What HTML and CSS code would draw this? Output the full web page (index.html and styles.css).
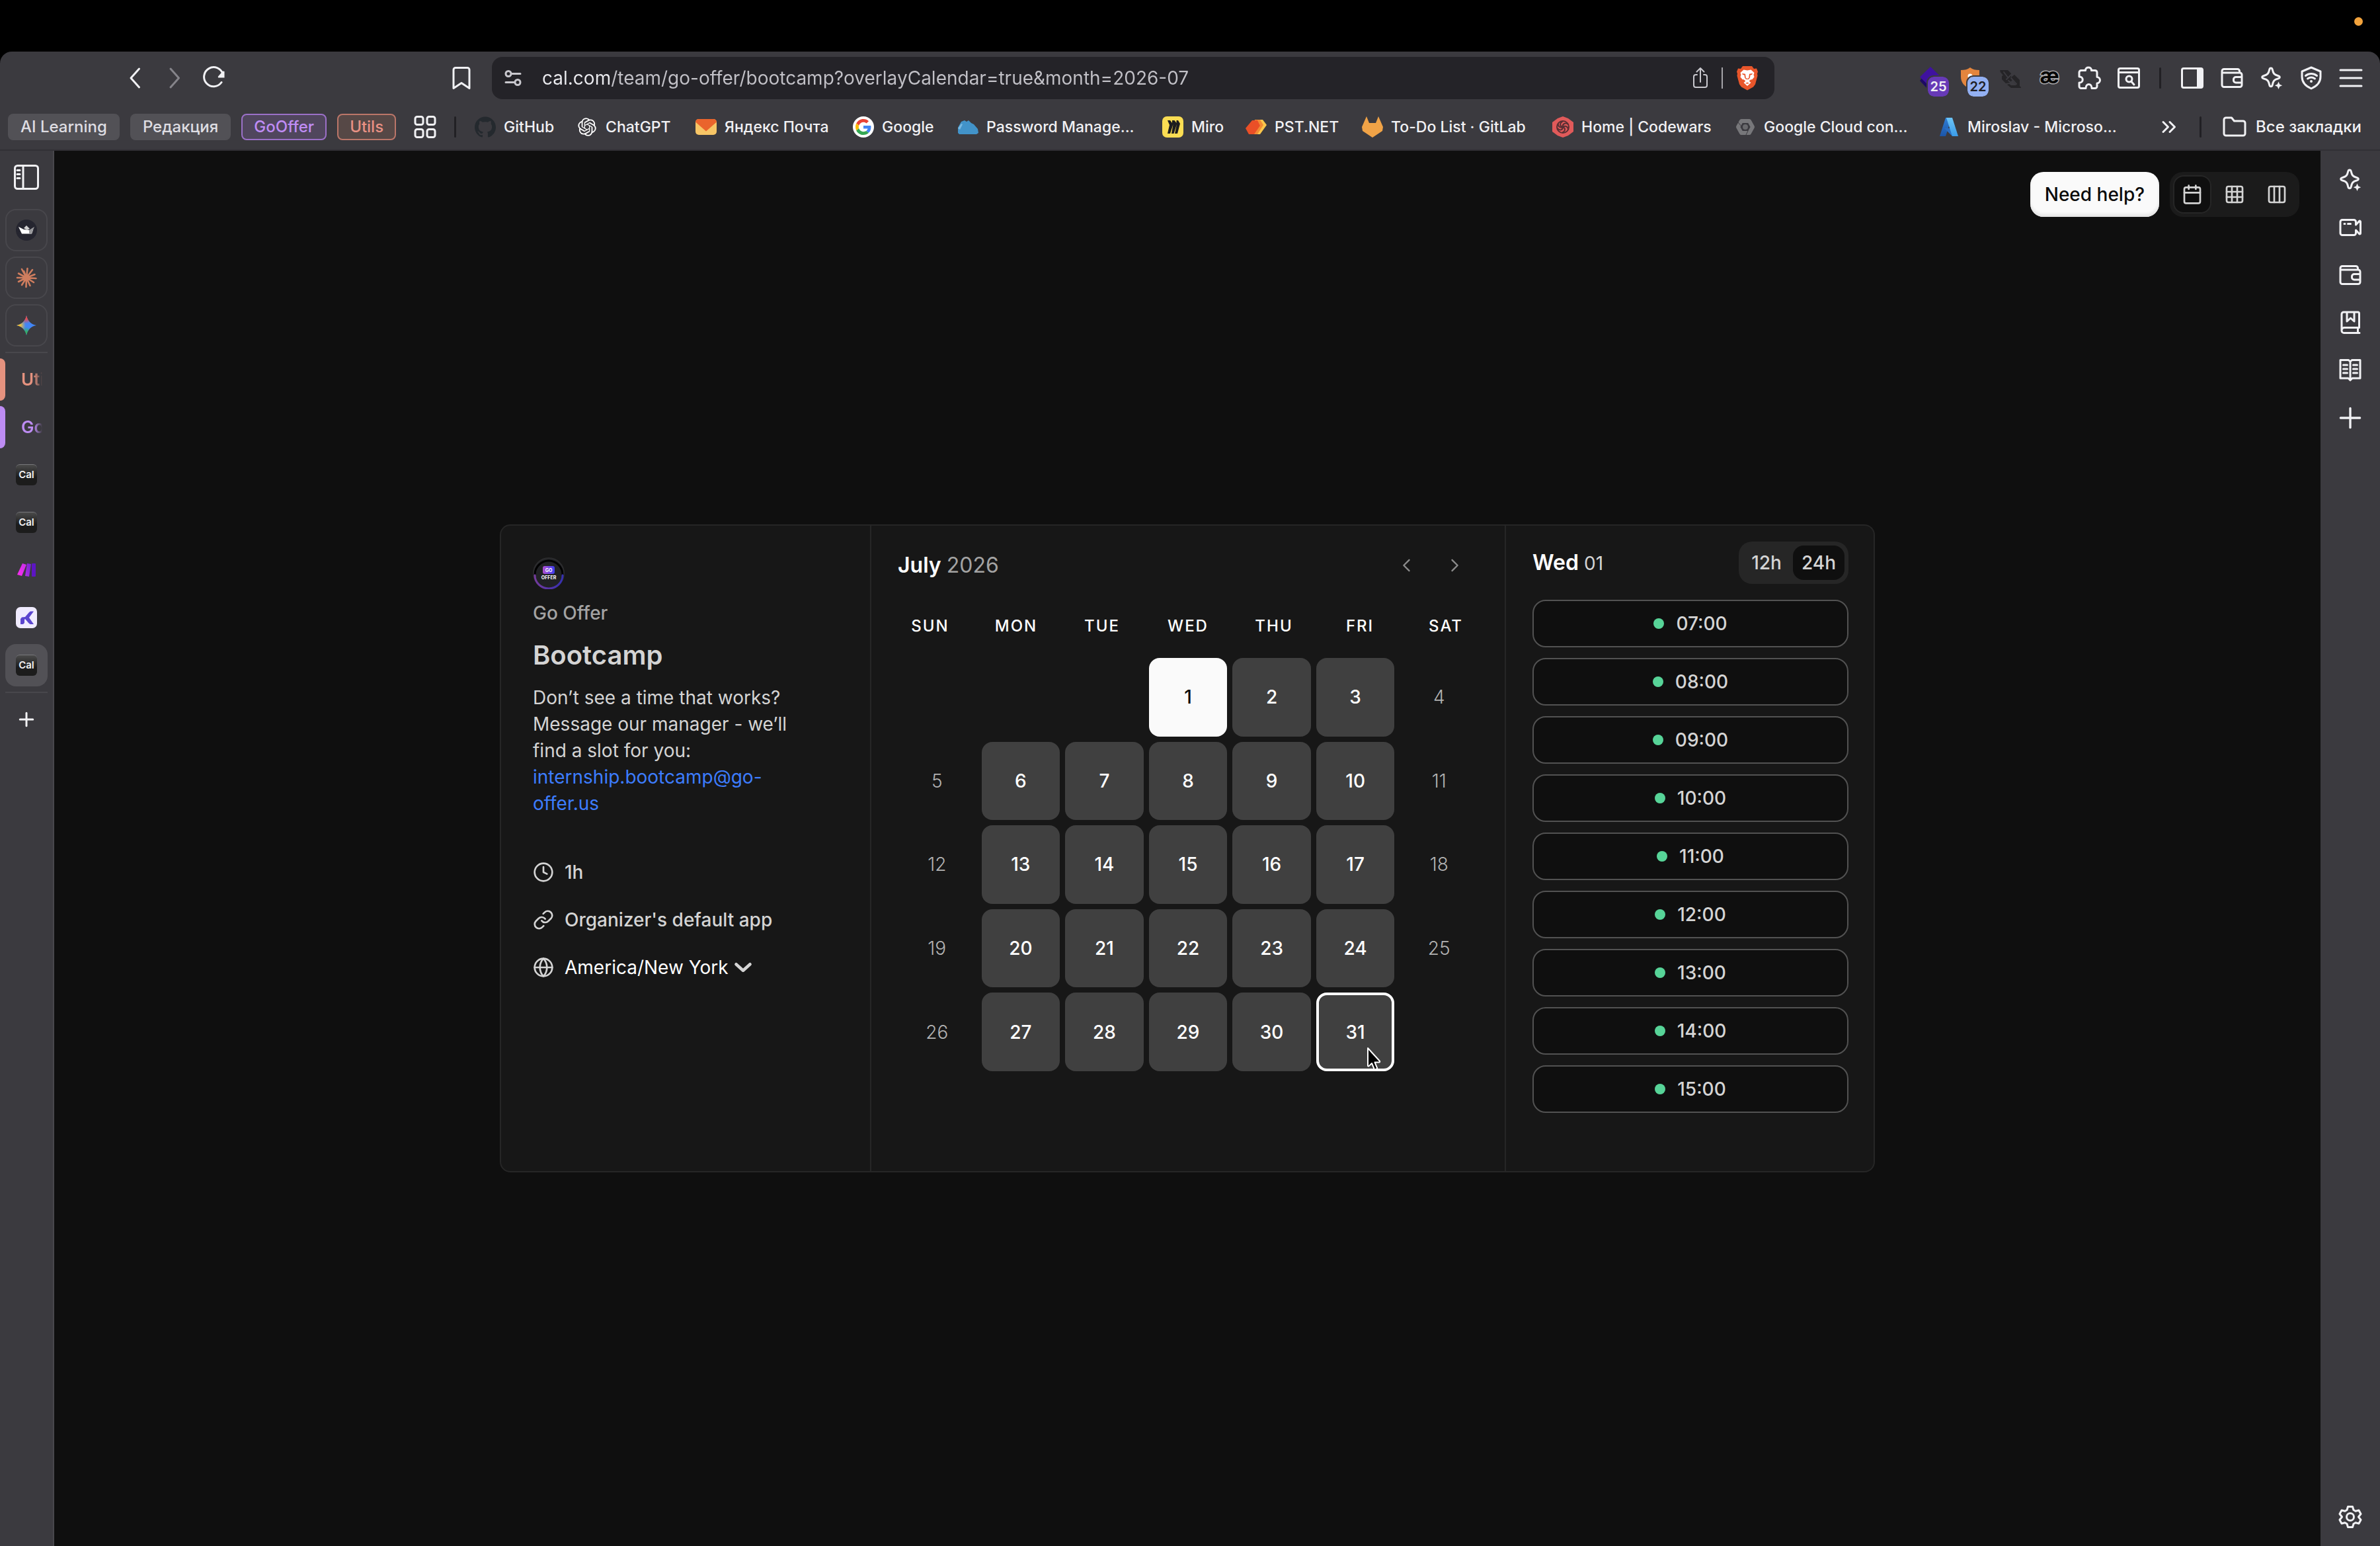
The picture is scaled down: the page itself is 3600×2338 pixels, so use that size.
FILE: index.html
```html
<!DOCTYPE html>
<html lang="en">
<head>
<meta charset="utf-8">
<meta name="viewport" content="width=device-width, initial-scale=1">
<title>Bootcamp | Go Offer | Cal.com</title>
<link rel="stylesheet" href="styles.css">
</head>
<body>
<svg class="sprite" aria-hidden="true">
  <defs>
    <linearGradient id="az1" x1="0" y1="0" x2="0" y2="1"><stop offset="0" stop-color="#2f7fd6"/><stop offset="1" stop-color="#1c55a8"/></linearGradient>
    <linearGradient id="az2" x1="0" y1="0" x2="0" y2="1"><stop offset="0" stop-color="#6cc4f7"/><stop offset="1" stop-color="#3a9be8"/></linearGradient>
    <linearGradient id="mk1" x1="0" y1="1" x2="1" y2="0"><stop offset="0" stop-color="#ff2df0"/><stop offset="1" stop-color="#c32ee8"/></linearGradient>
    <linearGradient id="mk2" x1="0" y1="1" x2="1" y2="0"><stop offset="0" stop-color="#b02ee6"/><stop offset="1" stop-color="#7421d0"/></linearGradient>
    <linearGradient id="go" x1="0" y1="0" x2="1" y2="0"><stop offset="0" stop-color="#b14fd0"/><stop offset="1" stop-color="#3b3df0"/></linearGradient>
    <linearGradient id="ring" x1="0" y1="0" x2="1" y2="0"><stop offset="0" stop-color="#743a9c"/><stop offset="1" stop-color="#352fb0"/></linearGradient>
    <radialGradient id="gm1" cx="46%" cy="0%" r="42%"><stop offset="0.4" stop-color="#ee4a45"/><stop offset="1" stop-color="#ee4a45" stop-opacity="0"/></radialGradient>
    <radialGradient id="gm2" cx="0%" cy="50%" r="46%"><stop offset="0.4" stop-color="#f5c02f"/><stop offset="1" stop-color="#f5c02f" stop-opacity="0"/></radialGradient>
    <radialGradient id="gm3" cx="46%" cy="100%" r="42%"><stop offset="0.4" stop-color="#34b35a"/><stop offset="1" stop-color="#34b35a" stop-opacity="0"/></radialGradient>
  </defs>
  <symbol id="i-wallet" viewBox="0 0 36 36"><path d="M3 8v20.500a3 3 0 0 0 3 3h24a3 3 0 0 0 3-3V13a3 3 0 0 0-3-3H3M3 10V7.500a3 3 0 0 1 3-3h20.500a3 3 0 0 1 3 3V10M33 16.500h-9a3.500 3.500 0 0 0-3.500 3.500v1.500a3.500 3.500 0 0 0 3.500 3.500h9"/></symbol>
  <symbol id="i-spark" viewBox="0 0 36 36"><path d="M17 3c1.300 0 2 1 2.300 2.300 1.200 6 2.700 7.700 8.200 9.200 3.700 1 3.700 3.500 0 4.500-5.500 1.500-7 3.200-8.200 9.200-.600 3.400-4 3.400-4.600 0-1.200-6-2.700-7.700-8.200-9.200-3.700-1-3.700-3.500 0-4.500 5.500-1.500 7-3.200 8.200-9.200C15 4 15.700 3 17 3z"/><path class="solid" d="M28.500 23.500l1.700 4 4 1.700-4 1.700-1.700 4-1.700-4-4-1.700 4-1.700z"/></symbol>
  <symbol id="i-plus" viewBox="0 0 32 32"><path d="M16 3v26M3 16h26"/></symbol>
</svg>

<div class="menubar"><span class="rec-dot"></span></div>

<header class="chrome">
  <div class="toolbar">
    <nav class="nav-group" aria-label="Navigation">
      <button class="tool" aria-label="Back"><svg viewBox="0 0 36 36"><path d="M24.500 4L12 18l12.500 14"/></svg></button>
      <button class="tool dim" aria-label="Forward"><svg viewBox="0 0 36 36"><path d="M12 4l12.500 14L12 32"/></svg></button>
      <button class="tool" aria-label="Reload"><svg viewBox="0 0 36 36"><path d="M29 24.500A14.500 14.500 0 1 1 31 12"/><path class="solid" d="M33.500 8v9.500h-9.500a3 3 0 0 1 0-2l7-8z"/></svg></button>
    </nav>
    <button class="tool page-mark" aria-label="Bookmark this page"><svg viewBox="0 0 36 36"><path d="M6 5.500a3 3 0 0 1 3-3h18a3 3 0 0 1 3 3V33.500l-12-8-12 8z"/></svg></button>
    <div class="urlbar">
      <svg class="site" viewBox="0 0 28 28"><circle cx="7" cy="7.500" r="4"/><path d="M11.500 7.500H25M3 20.500h13.500"/><circle cx="21" cy="20.500" r="4"/></svg>
      <input class="url" aria-label="Address" value="cal.com/team/go-offer/bootcamp?overlayCalendar=true&amp;month=2026-07">
      <button class="url-btn share" aria-label="Share"><svg viewBox="0 0 32 36"><path d="M16 24V3.500M10.500 8.500L16 3l5.500 5.500M11 13H9a3 3 0 0 0-3 3v13a3 3 0 0 0 3 3h14a3 3 0 0 0 3-3V16a3 3 0 0 0-3-3h-2"/></svg></button>
      <span class="url-sep"></span>
      <button class="url-btn" aria-label="Brave Shields"><svg class="brave" viewBox="0 0 34 38"><path fill="#e8562b" d="M10 1h14l3 4 4-.500 2 5-1 3 .500 3-3.500 13-3 4-9 5-9-5-3-4L1.500 15.500l.500-3-1-3 2-5L7 5z"/><path fill="#fff" d="M17 7.500l5.500-1 5 4.500-1 3 1 3.500-3.500 4-1-.500-3 2 .500 1.500 2 1.500-5.500 5-5.500-5 2-1.500.500-1.500-3-2-1 .500-3.500-4 1-3.500-1-3 5-4.500z"/><path fill="#e8562b" d="M9 12l5 .800.800 6.200 2.200 1 2.200-1 .800-6.200 5-.800-1 2-2.500.500-.500 4-2 2.500h-4l-2-2.500-.500-4-2.500-.500zM14 27l3-1.500 3 1.500-3 .800z"/></svg></button>
    </div>
    <div class="ext-group">
      <button class="tool ext" aria-label="Extension, 25"><svg viewBox="0 0 36 36"><path fill="#1d0a63" stroke="none" d="M2 22l4-5 12 11-4 7z"/><path fill="#3f12a0" stroke="none" d="M18 1l16 15.500L18 32 2 16.500z"/></svg><span class="badge violet">25</span></button>
      <button class="tool ext" aria-label="Extension, 22"><svg viewBox="0 0 36 36"><path fill="#e4853d" stroke="none" d="M18 2c4 3 8 4 14 4v10c0 9-6 15-14 19C10 31 4 25 4 16V6c6 0 10-1 14-4z"/><circle cx="18" cy="15" r="3.500" fill="#fff" stroke="none"/></svg><span class="badge sky">22</span></button>
      <button class="tool" aria-label="Extension"><svg viewBox="0 0 36 36"><path fill="#252427" stroke="none" d="M3 6h12l5 5v6l5-4 8 8v9l2 2v1H20l-6-5 3-1 3 2h8l-6-8-4 4-6 1-6-6v-5l2-1-5-6H4z"/><path stroke="#3b3a3f" stroke-width="2" d="M9 9l6 8M13 20l8-8M20 18l8 9M16 22l4 3"/></svg></button>
      <button class="tool glyph" aria-label="Extension">æ</button>
      <button class="tool" aria-label="Extensions"><svg viewBox="0 0 36 36"><path d="M3 9.500a3 3 0 0 1 3-3h6.500C12 .500 22 .500 21.500 6.500H27a3 3 0 0 1 3 3v7c6 .500 6 9 0 9.500V30.500a3 3 0 0 1-3 3h-5c0-8-9-8-9 0H6a3 3 0 0 1-3-3V25c7 .500 7-9.500 0-9z"/></svg></button>
      <button class="tool" aria-label="Search tabs"><svg viewBox="0 0 36 36"><rect x="2.500" y="3.500" width="31" height="29" rx="2.500"/><path d="M2.500 9.500h31M22 23.500l4 4.500"/><circle cx="18.500" cy="19.500" r="4.500"/></svg></button>
      <span class="sep"></span>
      <button class="tool" aria-label="Side panel"><svg viewBox="0 0 36 36"><rect x="2.500" y="3.500" width="31" height="29" rx="2.500"/><path class="solid" d="M25 3.500h8v29h-8z"/></svg></button>
      <button class="tool" aria-label="Wallet"><svg><use href="#i-wallet"/></svg></button>
      <button class="tool" aria-label="Leo AI"><svg><use href="#i-spark"/></svg></button>
      <button class="tool" aria-label="VPN"><svg viewBox="0 0 36 36"><path d="M18 2l14 6v8c0 8-5 14-14 18C9 30 4 24 4 16V8z"/><path d="M9.500 14.500c5-4 12-4 17 0M12.500 19c3.500-2.500 7.500-2.500 11 0"/><circle class="solid" cx="18" cy="23" r="2"/></svg></button>
      <button class="tool" aria-label="Menu"><svg viewBox="0 0 36 36"><path d="M2 6h32M2 18h32M2 30h32"/></svg></button>
    </div>
  </div>

  <div class="bookbar">
    <div class="chips">
      <button class="chip">AI Learning</button>
      <button class="chip">Редакция</button>
      <button class="chip purple">GoOffer</button>
      <button class="chip coral">Utils</button>
    </div>
    <button class="tool grid-btn" aria-label="Tab groups"><svg viewBox="0 0 36 36"><rect x="3" y="2.500" width="12" height="12" rx="3"/><rect x="21" y="2.500" width="12" height="12" rx="3"/><rect x="3" y="21.500" width="12" height="12" rx="3"/><rect x="21" y="21.500" width="12" height="12" rx="3"/></svg></button>
    <span class="sep"></span>
    <nav class="bookmarks" aria-label="Bookmarks">
      <a href="#github"><svg viewBox="0 0 24 24"><path fill="#24292e" d="M12 .297c-6.630 0-12 5.373-12 12 0 5.303 3.438 9.800 8.205 11.385.6.113.82-.258.82-.577 0-.285-.01-1.040-.015-2.040-3.338.724-4.042-1.610-4.042-1.610C4.422 18.070 3.633 17.700 3.633 17.700c-1.087-.744.084-.729.084-.729 1.205.084 1.838 1.236 1.838 1.236 1.070 1.835 2.809 1.305 3.495.998.108-.776.417-1.305.76-1.605-2.665-.3-5.466-1.332-5.466-5.930 0-1.310.465-2.380 1.235-3.220-.135-.303-.54-1.523.105-3.176 0 0 1.005-.322 3.300 1.230.96-.267 1.980-.399 3-.405 1.020.006 2.040.138 3 .405 2.280-1.552 3.285-1.230 3.285-1.230.645 1.653.24 2.873.12 3.176.765.840 1.230 1.910 1.230 3.220 0 4.610-2.805 5.625-5.475 5.920.42.360.81 1.096.81 2.220 0 1.606-.015 2.896-.015 3.286 0 .315.21.690.825.570C20.565 22.092 24 17.592 24 12.297c0-6.627-5.373-12-12-12"/></svg>GitHub</a>
      <a href="#chatgpt"><svg viewBox="-2 -2 28 28"><path fill="#fff" d="M22.2819 9.8211a5.9847 5.9847 0 0 0-.5157-4.9108 6.0462 6.0462 0 0 0-6.5098-2.9A6.0651 6.0651 0 0 0 4.9807 4.1818a5.9847 5.9847 0 0 0-3.9977 2.9 6.0462 6.0462 0 0 0 .7427 7.0966 5.98 5.98 0 0 0 .511 4.9107 6.051 6.051 0 0 0 6.5146 2.9001A5.9847 5.9847 0 0 0 13.2599 24a6.0557 6.0557 0 0 0 5.7718-4.2058 5.9894 5.9894 0 0 0 3.9977-2.9001 6.0557 6.0557 0 0 0-.7475-7.0729zm-9.022 12.6081a4.4755 4.4755 0 0 1-2.8764-1.0408l.1419-.0804 4.7783-2.7582a.7948.7948 0 0 0 .3927-.6813v-6.7369l2.02 1.1686a.071.071 0 0 1 .038.052v5.5826a4.504 4.504 0 0 1-4.4945 4.4944zm-9.6607-4.1254a4.4708 4.4708 0 0 1-.5346-3.0137l.142.0852 4.783 2.7582a.7712.7712 0 0 0 .7806 0l5.8428-3.3685v2.3324a.0804.0804 0 0 1-.0332.0615L9.74 19.9502a4.4992 4.4992 0 0 1-6.1408-1.6464zM2.3408 7.8956a4.485 4.485 0 0 1 2.3655-1.9728V11.6a.7664.7664 0 0 0 .3879.6765l5.8144 3.3543-2.0201 1.1685a.0757.0757 0 0 1-.071 0l-4.8303-2.7865A4.504 4.504 0 0 1 2.3408 7.872zm16.5963 3.8558L13.1038 8.364 15.1192 7.2a.0757.0757 0 0 1 .071 0l4.8303 2.7913a4.4944 4.4944 0 0 1-.6765 8.1042v-5.6772a.79.79 0 0 0-.407-.667zm2.0107-3.0231l-.142-.0852-4.7735-2.7818a.7759.7759 0 0 0-.7854 0L9.409 9.2297V6.8974a.0662.0662 0 0 1 .0284-.0615l4.8303-2.7866a4.4992 4.4992 0 0 1 6.6802 4.66zM8.3065 12.863l-2.02-1.1638a.0804.0804 0 0 1-.038-.0567V6.0742a4.4992 4.4992 0 0 1 7.3757-3.4537l-.142.0805L8.704 5.459a.7948.7948 0 0 0-.3927.6813zm1.0976-2.3654l2.602-1.4998 2.6069 1.4998v2.9994l-2.5974 1.4997-2.6067-1.4997Z"/></svg>ChatGPT</a>
      <a href="#mail"><svg viewBox="0 0 32 32"><rect y="4" width="32" height="24" rx="5" fill="#f7c566"/><path fill="#ea642c" d="M5 4h22a5 5 0 0 1 5 4.500L16 22.500 0 8.500A5 5 0 0 1 5 4z"/></svg>Яндекс Почта</a>
      <a href="#google"><svg viewBox="0 0 48 48"><circle cx="24" cy="24" r="24" fill="#fff"/><g transform="translate(6 6) scale(.75)"><path fill="#ea4335" d="M24 9.500c3.540 0 6.710 1.220 9.210 3.600l6.850-6.850C35.900 2.380 30.470 0 24 0 14.620 0 6.510 5.380 2.560 13.220l7.980 6.190C12.430 13.720 17.740 9.500 24 9.500z"/><path fill="#4285f4" d="M46.980 24.550c0-1.570-.150-3.090-.380-4.550H24v9.020h12.940c-.580 2.960-2.260 5.480-4.780 7.180l7.730 6c4.510-4.180 7.090-10.360 7.090-17.650z"/><path fill="#fbbc05" d="M10.530 28.590c-.480-1.450-.760-2.990-.760-4.590s.270-3.140.760-4.590l-7.980-6.190C.920 16.460 0 20.120 0 24c0 3.880.920 7.540 2.560 10.780l7.970-6.190z"/><path fill="#34a853" d="M24 48c6.480 0 11.930-2.130 15.890-5.810l-7.730-6c-2.150 1.450-4.920 2.300-8.160 2.300-6.260 0-11.570-4.220-13.470-9.910l-7.980 6.190C6.510 42.620 14.620 48 24 48z"/></g></svg>Google</a>
      <a href="#password"><svg viewBox="0 0 32 32"><path fill="#4293c9" d="M1 25V17l5-9 5-2 3 2 3-2 4 4 4 2 6 7 1 6-3 2H3z"/><path fill="#79b8e0" d="M1 18l5-7 2 1-4 8z"/></svg>Password Manage...</a>
      <a href="#miro"><svg viewBox="0 0 32 32"><rect width="32" height="32" rx="7" fill="#fbdd53"/><path fill="#1c1c1e" d="M8 6h4l3 4 0-4h3.500l3 4 0-4H24l3 5-4 15h-4l3-14-4.500 14h-3.500l2.500-14L12 26H8l3-13z"/></svg>Miro</a>
      <a href="#pst"><svg viewBox="0 0 32 32"><path fill="#fbc64b" d="M18 5h8l6 8-10 14h-8z"/><path fill="#f38b34" d="M14 5h8l5 8-9 14h-9z"/><path fill="#ea4f27" d="M10 6h8l4 8-9 13H5L0 18z"/></svg>PST.NET</a>
      <a href="#gitlab"><svg viewBox="0 0 32 32"><path fill="#f0a347" d="M7 0l4 10h10l4-10 7 16-1 6-15 10L1 22l-1-6z"/></svg>To-Do List · GitLab</a>
      <a href="#codewars"><svg viewBox="0 0 32 32"><path fill="#e15a5a" d="M16 0l8 3 8 6v14l-8 6-8 3-8-3-8-6V9l8-6z"/><g fill="none" stroke="#5a2f33" stroke-width="2"><circle cx="16" cy="16" r="9"/><path d="M16 16c-5-1-5-6-1-8M16 16c-1-5 4-7 8-4M16 16c4-3 8 0 8 4M16 16c5 2 3 7 0 8M16 16c0 5-5 6-8 2M16 16c-4 2-8-1-7-5"/></g></svg>Home | Codewars</a>
      <a href="#gcloud"><svg viewBox="0 0 32 32"><path fill="none" stroke="#77777a" stroke-width="6" stroke-linejoin="round" d="M10 7h12l5 9-5 9H10l-5-9z"/><circle cx="16" cy="16" r="4" fill="#6a6a6d"/><path stroke="#3b3a3f" stroke-width="1" d="M5 9l6 7M17 28l3-6"/></svg>Google Cloud con...</a>
      <a href="#azure"><svg viewBox="0 0 32 32"><path fill="url(#az1)" d="M11 2h9L11 30H2z"/><path fill="#2a6fc4" d="M9 18h12l5 12h-5z"/><path fill="url(#az2)" d="M12 2h9l9 28h-9z"/></svg>Miroslav - Microso...</a>
    </nav>
    <button class="tool more" aria-label="More bookmarks"><svg viewBox="0 0 36 36"><path d="M9 10.500l7.500 7.500L9 25.500M19 10.500l7.500 7.500-7.500 7.500"/></svg></button>
    <span class="sep"></span>
    <a class="all-marks" href="#all"><svg viewBox="0 0 36 32"><path d="M2 5a3 3 0 0 1 3-3h8.500l4 5H31a3 3 0 0 1 3 3v16a3 3 0 0 1-3 3H5a3 3 0 0 1-3-3z"/></svg>Все закладки</a>
  </div>
</header>

<div class="workspace">
  <aside class="tabs" aria-label="Tabs">
    <button class="rail-btn collapse" aria-label="Toggle tab strip"><svg viewBox="0 0 40 40"><rect x="2.500" y="2.500" width="35" height="35" rx="4"/><path d="M15 2.500v35M6 9.500h4M6 15.500h4M6 21.500h4"/></svg></button>
    <div class="pinned">
      <button class="tab pin" aria-label="Boat"><svg viewBox="0 0 32 32"><circle cx="16" cy="16" r="16" fill="#25252f"/><path fill="#fff" d="M4 11l8 4 9 1 5 0-2 5.500H9z"/><path fill="#d0d0d0" d="M12 13l4-4 5 5-4 2z"/><path fill="#9a9a9d" d="M20 16l8-5-4 10-4 .500z"/></svg></button>
      <button class="tab pin" aria-label="Claude"><svg viewBox="0 0 32 32"><path stroke="#cf7d5e" stroke-width="2.600" d="M16 16L2 16M16 16L4 9.500M16 16L9 3M16 16L17.500 2M16 16L25 4M16 16L28.500 11M16 16L30.500 17M16 16L27 23M16 16L21.500 28M16 16L15.500 30M16 16L9 27M16 16L4 22M16 16L12 6"/></svg></button>
      <button class="tab pin" aria-label="Gemini"><svg viewBox="0 0 32 32"><path fill="#4285f4" d="M16 1c1.500 8 7 13.500 15 15-8 1.500-13.500 7-15 15-1.500-8-7-13.500-15-15 8-1.500 13.500-7 15-15z"/><path fill="url(#gm3)" d="M16 1c1.500 8 7 13.500 15 15-8 1.500-13.500 7-15 15-1.500-8-7-13.500-15-15 8-1.500 13.500-7 15-15z"/><path fill="url(#gm1)" d="M16 1c1.500 8 7 13.500 15 15-8 1.500-13.500 7-15 15-1.500-8-7-13.500-15-15 8-1.500 13.500-7 15-15z"/><path fill="url(#gm2)" d="M16 1c1.500 8 7 13.500 15 15-8 1.500-13.500 7-15 15-1.500-8-7-13.500-15-15 8-1.500 13.500-7 15-15z"/></svg></button>
    </div>
    <div class="open-tabs">
      <button class="tab group coral-tab"><span>Utils</span></button>
      <button class="tab group purple-tab"><span>GoOffer</span></button>
      <button class="tab"><span class="cal">Cal</span></button>
      <button class="tab"><span class="cal">Cal</span></button>
      <button class="tab" aria-label="Make"><svg viewBox="0 0 32 32"><path fill="url(#mk1)" d="M10 6l6 2-7 17-7-2z"/><path fill="url(#mk2)" d="M17 6l6 1-3 19-6-1z"/><rect x="24" y="6" width="6" height="20" rx="1" fill="#5d15c4"/></svg></button>
      <button class="tab" aria-label="K app"><svg viewBox="0 0 32 32"><rect width="32" height="32" rx="7" fill="#f0ebff"/><path fill="#5b45cf" d="M7 26v-8l2-2.500 5-.500 6-7 2-1.500h5L20 16l7 10h-5c-3-1-5-5-8-8l-1 1v5l-2 2z"/></svg></button>
      <button class="tab active"><span class="cal">Cal</span></button>
    </div>
    <button class="rail-btn" aria-label="New tab"><svg class="small"><use href="#i-plus"/></svg></button>
  </aside>

  <main class="page">
    <div class="page-top">
      <button class="help">Need help?</button>
      <div class="views" role="group" aria-label="Layout">
        <button class="view on" aria-label="Month"><svg viewBox="0 0 24 24"><rect x="3" y="4" width="18" height="18" rx="2"/><path d="M8 2v4M16 2v4M3 10h18"/></svg></button>
        <button class="view" aria-label="Week"><svg viewBox="0 0 24 24"><rect x="3" y="3" width="18" height="18" rx="2"/><path d="M3 9h18M3 15h18M9 3v18M15 3v18"/></svg></button>
        <button class="view" aria-label="Column"><svg viewBox="0 0 24 24"><rect x="3" y="3" width="18" height="18" rx="2"/><path d="M9 3v18M15 3v18"/></svg></button>
      </div>
    </div>

    <div class="booker">
      <section class="meta">
        <svg class="avatar" viewBox="0 0 48 48" role="img" aria-label="Go Offer logo"><circle cx="24" cy="24" r="23" fill="#202124" stroke="#2c2c2e" stroke-width="2"/><path d="M3 26a21 21 0 0 1 42 0" fill="none" stroke="#000" stroke-width="3"/><path d="M3 27a21 20 0 0 0 42 0" fill="none" stroke="url(#ring)" stroke-width="3"/><rect x="15" y="13" width="18" height="12" rx="3" fill="url(#go)"/><text x="24" y="22" text-anchor="middle" class="logo-a">GO</text><text x="24" y="33" text-anchor="middle" class="logo-b">OFFER</text></svg>
        <p class="team">Go Offer</p>
        <h1>Bootcamp</h1>
        <p class="desc">Don’t see a time that works? Message our manager - we’ll find a slot for you: <a href="mailto:internship.bootcamp@go-offer.us">internship.bootcamp@go-offer.us</a></p>
        <ul class="facts">
          <li><svg viewBox="0 0 24 24"><circle cx="12" cy="12" r="10"/><path d="M12 6v6l4 2"/></svg>1h</li>
          <li><svg viewBox="0 0 24 24"><path d="M10 13a5 5 0 0 0 7.540.540l3-3a5 5 0 0 0-7.070-7.070l-1.720 1.710M14 11a5 5 0 0 0-7.540-.540l-3 3a5 5 0 0 0 7.070 7.070l1.710-1.710"/></svg>Organizer's default app</li>
          <li><svg viewBox="0 0 24 24"><circle cx="12" cy="12" r="10"/><path d="M2 12h20M12 2a14.500 14.500 0 0 0 0 20 14.500 14.500 0 0 0 0-20"/></svg><label class="zone"><select aria-label="Time zone"><option>America/New York</option></select><svg class="caret" viewBox="0 0 24 24"><path d="M3 8l9 8 9-8"/></svg></label></li>
        </ul>
      </section>

      <section class="calendar">
        <div class="cal-head">
          <h2>July <span>2026</span></h2>
          <div class="cal-nav">
            <button aria-label="Previous month"><svg viewBox="0 0 24 24"><path d="M15 5l-7 7 7 7"/></svg></button>
            <button aria-label="Next month"><svg viewBox="0 0 24 24"><path d="M9 5l7 7-7 7"/></svg></button>
          </div>
        </div>
        <div class="weekdays"><span>Sun</span><span>Mon</span><span>Tue</span><span>Wed</span><span>Thu</span><span>Fri</span><span>Sat</span></div>
        <div class="days">
          <button class="day first picked">1</button><button class="day">2</button><button class="day">3</button><button class="day" disabled>4</button>
          <button class="day" disabled>5</button><button class="day">6</button><button class="day">7</button><button class="day">8</button><button class="day">9</button><button class="day">10</button><button class="day" disabled>11</button>
          <button class="day" disabled>12</button><button class="day">13</button><button class="day">14</button><button class="day">15</button><button class="day">16</button><button class="day">17</button><button class="day" disabled>18</button>
          <button class="day" disabled>19</button><button class="day">20</button><button class="day">21</button><button class="day">22</button><button class="day">23</button><button class="day">24</button><button class="day" disabled>25</button>
          <button class="day" disabled>26</button><button class="day">27</button><button class="day">28</button><button class="day">29</button><button class="day">30</button><button class="day hovered">31<svg class="pointer" viewBox="0 0 24 38"><path d="M2 2v26.500c0 1 1 1.300 1.700.600l4.300-4.100 3.800 9c.500 1.200 4.800-.600 4.300-1.800L12.500 23.500h6.500c1.200 0 1.600-1.200.800-2z"/></svg></button>
        </div>
      </section>

      <section class="slots">
        <div class="slots-head">
          <h2>Wed <span>01</span></h2>
          <div class="hours" role="group" aria-label="Time format"><button>12h</button><button class="on">24h</button></div>
        </div>
        <div class="slot-list">
          <button class="slot"><i></i>07:00</button>
          <button class="slot"><i></i>08:00</button>
          <button class="slot"><i></i>09:00</button>
          <button class="slot"><i></i>10:00</button>
          <button class="slot"><i></i>11:00</button>
          <button class="slot"><i></i>12:00</button>
          <button class="slot"><i></i>13:00</button>
          <button class="slot"><i></i>14:00</button>
          <button class="slot"><i></i>15:00</button>
        </div>
      </section>
    </div>
  </main>

  <aside class="rail" aria-label="Sidebar">
    <button class="rail-btn" aria-label="Leo AI"><svg><use href="#i-spark"/></svg></button>
    <button class="rail-btn" aria-label="Talk"><svg viewBox="0 0 36 36"><path d="M3 9.500a3 3 0 0 1 3-3h17.500a3 3 0 0 1 3 3V14l5-5.500c.700-.800 2-.500 2 .700v17.600c0 1.200-1.300 1.500-2 .700l-5-5.500v4.500a3 3 0 0 1-3 3H6a3 3 0 0 1-3-3zM9 12.500h1M14.500 12.500h4"/></svg></button>
    <button class="rail-btn" aria-label="Wallet"><svg><use href="#i-wallet"/></svg></button>
    <button class="rail-btn" aria-label="Bookmarks"><svg viewBox="0 0 36 36"><path d="M32 33.500H8.500A3.500 3.500 0 0 1 5 30V5a3 3 0 0 1 3-3h21.500a2 2 0 0 1 2 2v21.500H8.500a4 4 0 0 0-3.500 4M29.500 25.500v8M13 2v14l5.500-5 5.500 5V2"/></svg></button>
    <button class="rail-btn" aria-label="Reading list"><svg viewBox="0 0 36 36"><path d="M18 5v27M18 5l-2.500-2.500H3V30h12l3 3 3-3h12V2.500H20.500zM7.500 10h6M7.500 16h6M7.500 22h6M22.500 10h6M22.500 16h6M22.500 22h6"/></svg></button>
    <button class="rail-btn" aria-label="Add"><svg><use href="#i-plus"/></svg></button>
    <button class="rail-btn last" aria-label="Settings"><svg viewBox="0 0 36 36"><circle cx="18" cy="18" r="5.500"/><path d="M14.500 2.500h7l1.500 5 3 1.700 5-1.200 3 5.500-3.500 4.500 3.500 4.500-3 5.500-5-1.200-3 1.700-1.500 5h-7l-1.500-5-3-1.700-5 1.200-3-5.500L5.500 18 2 13.500 5 8l5 1.200 3-1.700z"/></svg></button>
  </aside>
</div>
</body>
</html>
```
FILE: styles.css
```css
* {
  box-sizing: border-box;
}

body {
  margin: 0;
  min-height: 100vh;
  display: flex;
  flex-direction: column;
  background: #000;
  color: #fff;
  font-family: Inter, "Liberation Sans", sans-serif;
  font-size: 28px;
  line-height: 40px;
}

h1,
h2,
p,
ul {
  margin: 0;
  padding: 0;
}

ul {
  list-style: none;
}

button,
input,
select {
  margin: 0;
  padding: 0;
  border: 0;
  background: none;
  color: inherit;
  font: inherit;
}

a {
  color: inherit;
  text-decoration: none;
}

svg {
  flex: none;
  display: block;
  fill: none;
  stroke-linecap: round;
  stroke-linejoin: round;
}

.sprite {
  position: absolute;
  width: 0;
  height: 0;
}

.solid {
  fill: currentColor;
  stroke: none;
}

/* System menu bar */

.menubar {
  height: 78px;
  padding: 26px 26px 0;
  display: flex;
  justify-content: flex-end;
}

.rec-dot {
  width: 13px;
  height: 13px;
  border-radius: 50%;
  background: #f2a33c;
}

/* Browser chrome */

.chrome {
  height: 150px;
  background: #3b3a3f;
  border-radius: 18px 18px 0 0;
  border-bottom: 2px solid #313035;
  font-size: 24px;
  line-height: 32px;
  color: #f1f1f4;
}

.toolbar {
  height: 80px;
  padding: 0 14px 0 174px;
  display: flex;
  align-items: center;
}

.nav-group,
.ext-group {
  display: flex;
  align-items: center;
}

.tool {
  position: relative;
  flex: none;
  width: 60px;
  height: 60px;
  display: flex;
  align-items: center;
  justify-content: center;
}

.tool svg,
.rail-btn svg {
  width: 36px;
  height: 36px;
  stroke: currentColor;
  stroke-width: 3;
}

.dim {
  color: #85848a;
}

.page-mark {
  margin-left: auto;
  margin-right: 16px;
}

.urlbar {
  flex: 0 1 1940px;
  height: 64px;
  padding: 0 24px 0 18px;
  display: flex;
  align-items: center;
  border-radius: 16px;
  background: #242328;
}

.urlbar svg {
  stroke: #c9c8ce;
  stroke-width: 3;
}

.site {
  width: 28px;
  height: 28px;
  margin-right: 30px;
}

.url {
  flex: 1;
  min-width: 0;
  height: 40px;
  font-size: 28px;
  color: transparent;
  background: linear-gradient(90deg, #ececf0 102px, #c2c1c7 102px);
  background-clip: text;
  -webkit-background-clip: text;
}

.url-btn svg {
  width: 32px;
  height: 36px;
  stroke-width: 2;
}

.url-btn .brave {
  width: 34px;
  height: 38px;
  stroke: none;
}

.url-sep {
  width: 2px;
  height: 32px;
  margin: 0 20px 0 16px;
  background: #a5a4aa;
}

.ext-group {
  margin-left: 206px;
}

.badge {
  position: absolute;
  left: 26px;
  top: 28px;
  width: 32px;
  height: 30px;
  border-radius: 9px;
  outline: 2px solid #3b3a3f;
  font-size: 20px;
  font-weight: 600;
  line-height: 30px;
  text-align: center;
}

.violet {
  background: #673ab7;
}

.sky {
  background: #93b0f2;
  color: #1f1f25;
}

.glyph {
  color: #050505;
  font-size: 32px;
  font-weight: 700;
  line-height: 40px;
  padding-bottom: 6px;
  -webkit-text-stroke: 3px #a9a8ab;
  paint-order: stroke fill;
}

.sep {
  flex: none;
  width: 3px;
  height: 32px;
  border-radius: 2px;
  background: #212024;
}

.ext-group .sep {
  margin: 0 17px 0 16px;
}

/* Bookmarks bar */

.bookbar {
  height: 68px;
  padding: 0 28px 0 12px;
  display: flex;
  align-items: center;
}

.chips {
  display: flex;
  gap: 16px;
}

.chip {
  height: 40px;
  padding: 0 17px;
  border: 2px solid #525156;
  border-radius: 8px;
  background: #525156;
  color: #dedde2;
  font-size: 24px;
  font-weight: 500;
}

.purple {
  border-color: #9b70c8;
  background: #50465d;
  color: #bf8cf5;
}

.coral {
  border-color: #bb7669;
  background: #564846;
  color: #e99184;
}

.grid-btn {
  margin: 0 14px;
}

.bookmarks {
  margin-left: 28px;
  display: grid;
  grid-template-columns: 154px 180px 238px 158px 310px 126px 176px 288px 276px 308px 300px;
}

.bookmarks a,
.all-marks {
  display: flex;
  align-items: center;
  gap: 12px;
  white-space: nowrap;
  font-weight: 500;
  font-size: 23px;
}

.bookmarks svg {
  width: 32px;
  height: 32px;
}

.more {
  margin-left: auto;
  margin-right: 16px;
}

.bookbar .all-marks {
  margin-left: 32px;
  gap: 14px;
  font-size: 24px;
}

.all-marks svg {
  width: 36px;
  height: 32px;
  stroke: currentColor;
  stroke-width: 3;
}

/* Window body */

.workspace {
  flex: 1;
  display: grid;
  grid-template-columns: 82px minmax(0, 1fr) 90px;
  background: #0f0f0f;
}

.tabs,
.rail {
  display: flex;
  flex-direction: column;
  background: #3b3a3f;
  color: #f1f1f4;
}

.tabs {
  border-right: 2px solid #48474c;
  padding: 8px 8px 0;
  gap: 8px;
}

.rail {
  padding: 12px 0;
  gap: 8px;
}

.rail-btn {
  flex: none;
  height: 64px;
  display: flex;
  align-items: center;
  justify-content: center;
}

.rail-btn .small {
  width: 24px;
  height: 24px;
  stroke-width: 4;
}

.collapse svg {
  width: 40px;
  height: 40px;
}

.last {
  margin-top: auto;
}

.pinned,
.open-tabs {
  display: flex;
  flex-direction: column;
  gap: 8px;
  padding: 8px 0;
  border-bottom: 2px solid #48474c;
}

.open-tabs {
  padding: 0 0 8px;
}

.tab {
  position: relative;
  height: 64px;
  display: flex;
  align-items: center;
  justify-content: center;
  border-radius: 16px;
}

.tab svg {
  width: 32px;
  height: 32px;
}

.pin {
  border: 2px solid #48474c;
}

.active {
  background: #525156;
}

.group {
  justify-content: flex-start;
  padding-left: 24px;
  font-size: 26px;
  font-weight: 600;
}

.group span {
  width: 32px;
  overflow: hidden;
  text-align: left;
  -webkit-mask-image: linear-gradient(90deg, #000 60%, transparent);
  mask-image: linear-gradient(90deg, #000 60%, transparent);
}

.group::before {
  content: "";
  position: absolute;
  left: -8px;
  top: 0;
  width: 8px;
  height: 64px;
  border-radius: 0 8px 8px 0;
  background: currentColor;
}

.coral-tab {
  color: #e5927f;
}

.purple-tab {
  color: #bd8cf3;
}

.cal {
  width: 32px;
  height: 32px;
  border-radius: 6px;
  border-top: 1px solid #77777a;
  background: linear-gradient(#4a4a4a, #1c1c1c 60%);
  color: #f2f2f2;
  font-size: 15px;
  font-weight: 600;
  line-height: 30px;
  text-align: center;
}

/* Booking page */

.page {
  display: grid;
  grid-template-rows: 1fr auto 1fr;
  justify-items: center;
}

.page-top {
  justify-self: end;
  align-self: start;
  display: flex;
  gap: 16px;
  padding: 32px;
}

.help {
  height: 68px;
  padding: 0 22px;
  border-radius: 20px;
  background: #fafafa;
  box-shadow: inset 0 -4px 4px #e4e4e4;
  color: #0a0a0a;
  font-weight: 500;
}

.views {
  height: 68px;
  padding: 5px;
  display: flex;
  gap: 6px;
  border-radius: 20px;
  background: #1b1b1b;
}

.view {
  width: 58px;
  display: flex;
  align-items: center;
  justify-content: center;
  border-radius: 16px;
  border: 2px solid transparent;
  color: #d4d4d4;
}

.view svg {
  width: 32px;
  height: 32px;
  stroke: currentColor;
  stroke-width: 2;
}

.view.on {
  background: #0f0f0f;
  border-color: #262626;
}

.booker {
  width: 2080px;
  max-width: 100%;
  display: grid;
  grid-template-columns: minmax(0, 558px) minmax(0, 962px) minmax(0, 556px);
  border: 2px solid #262626;
  border-radius: 16px;
  background: #171717;
  color: #d4d4d4;
}

.meta {
  padding: 48px 80px 48px 48px;
}

.avatar {
  width: 48px;
  height: 48px;
}

.logo-a,
.logo-b {
  fill: #fff;
  font-size: 7px;
  font-weight: 700;
}

.team {
  margin-top: 16px;
  color: #a3a3a3;
  font-weight: 500;
}

h1 {
  margin: 20px 0;
  font-size: 40px;
  font-weight: 600;
  line-height: 48px;
}

.desc a {
  color: #3d7dff;
}

.facts {
  margin-top: 64px;
  display: grid;
  gap: 32px;
  font-weight: 500;
}

.facts li {
  height: 40px;
  display: flex;
  align-items: center;
  gap: 16px;
}

.facts svg {
  width: 32px;
  height: 32px;
  stroke: #d4d4d4;
  stroke-width: 2;
}

.zone {
  display: flex;
  align-items: center;
  gap: 8px;
  color: #fff;
  font-weight: 400;
}

.zone select {
  appearance: none;
  height: 40px;
}

.facts .caret {
  width: 28px;
  height: 28px;
  stroke-width: 4;
}

.calendar {
  padding: 24px 40px;
  border: 2px solid #262626;
  border-width: 0 2px;
}

h2 {
  color: #fff;
  font-size: 32px;
  font-weight: 600;
  line-height: 40px;
}

h2 span {
  color: #a3a3a3;
  font-weight: 400;
}

.cal-head {
  height: 72px;
  display: flex;
  align-items: center;
  justify-content: space-between;
}

.cal-nav {
  display: flex;
}

.cal-nav button {
  width: 72px;
  height: 64px;
  display: flex;
  align-items: center;
  justify-content: center;
}

.cal-nav svg {
  width: 28px;
  height: 28px;
  stroke: #8c8c8c;
  stroke-width: 2;
}

.weekdays {
  margin: 38px 0 30px;
  display: grid;
  grid-template-columns: repeat(7, minmax(0, 1fr));
  gap: 32px;
  color: #fff;
  font-size: 24px;
  font-weight: 500;
  letter-spacing: 2px;
  line-height: 36px;
  text-align: center;
  text-transform: uppercase;
}

.days {
  display: grid;
  grid-template-columns: repeat(7, minmax(0, 1fr));
  gap: 8px;
}

.day {
  position: relative;
  aspect-ratio: 1;
  border-radius: 16px;
  background: #404040;
  color: #fff;
  font-weight: 500;
}

.day:disabled {
  background: none;
  color: #b3b3b3;
  font-weight: 300;
}

.first {
  grid-column-start: 4;
}

.picked {
  background: #fafafa;
  color: #0a0a0a;
}

.hovered {
  box-shadow: inset 0 0 0 4px #fff;
}

.pointer {
  position: absolute;
  left: 76px;
  top: 82px;
  width: 24px;
  height: 38px;
  fill: #000;
  stroke: #fff;
  stroke-width: 2;
}

.slots {
  padding: 24px 38px 88px 40px;
}

.slots-head {
  display: flex;
  align-items: center;
  justify-content: space-between;
}

.slots-head span {
  color: #d4d4d4;
  font-size: 28px;
}

.hours {
  height: 64px;
  padding: 6px;
  display: flex;
  gap: 4px;
  border-radius: 20px;
  background: #262626;
  font-weight: 500;
}

.hours button {
  padding: 0 13px;
  border-radius: 16px;
}

.hours .on {
  background: #0f0f0f;
}

.slot-list {
  margin-top: 24px;
  display: grid;
  gap: 16px;
}

.slot {
  height: 72px;
  display: flex;
  align-items: center;
  justify-content: center;
  gap: 18px;
  border: 2px solid #525252;
  border-radius: 20px;
  background: #0f0f0f;
  font-weight: 500;
}

.slot i {
  width: 16px;
  height: 16px;
  border-radius: 50%;
  background: #57d498;
}
```
